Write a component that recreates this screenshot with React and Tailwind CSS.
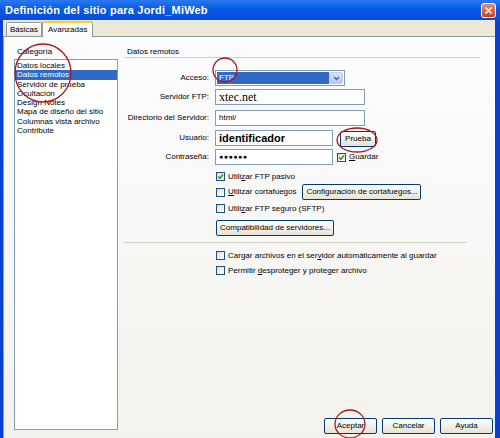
import React from "react";

const font = { fontFamily: '"Liberation Sans", Arial, sans-serif' };

const XpButton = ({ children, className = "" }) => (
  <div
    className={`h-[16px] flex items-center justify-center rounded-[2px] border border-[#003c74] bg-gradient-to-b from-white to-[#e6e3d6] text-[8px] text-black whitespace-nowrap ${className}`}
  >
    {children}
  </div>
);

const Check = ({ checked }) => (
  <div className="w-[9px] h-[9px] border border-[#1c5180] bg-gradient-to-br from-[#dcdcd7] to-white flex items-center justify-center shrink-0">
    {checked && (
      <svg width="7" height="7" viewBox="0 0 7 7">
        <path d="M1 3.5 L2.8 5.3 L6 1.5" stroke="#21a121" strokeWidth="1.5" fill="none" />
      </svg>
    )}
  </div>
);

const CheckRow = ({ checked, children, className = "" }) => (
  <div className={`flex items-center gap-[3px] text-[8px] text-black whitespace-nowrap ${className}`}>
    <Check checked={checked} />
    <span>{children}</span>
  </div>
);

const Field = ({ label, children, className = "" }) => (
  <div className={`flex items-center h-[16px] ${className}`}>
    <div className="w-[91px] shrink-0 flex justify-end pr-[6px] text-[8px] text-black whitespace-nowrap">
      {label}
    </div>
    {children}
  </div>
);

const Input = ({ w, children }) => (
  <div className={`h-[16px] ${w} border border-[#7f9db9] bg-white flex items-center px-[3px] overflow-hidden`}>
    {children}
  </div>
);

const categories = [
  "Datos locales",
  "Datos remotos",
  "Servidor de prueba",
  "Ocultación",
  "Design Notes",
  "Mapa de diseño del sitio",
  "Columnas vista archivo",
  "Contribute",
];

export default function App() {
  return (
    <div
      className="relative w-[500px] h-[438px] overflow-hidden bg-[#0a3fd8] flex flex-col"
      style={font}
    >
      {/* title bar */}
      <div className="h-[20px] shrink-0 bg-gradient-to-b from-[#2a78f0] via-[#0558e6] to-[#0a4cd8] flex items-center justify-between pl-[5px] pr-[4px]">
        <span className="text-white font-bold text-[11px] tracking-[0.2px]">
          Definición del sitio para Jordi_MiWeb
        </span>
        <div className="w-[15px] h-[15px] rounded-[3px] border border-white bg-gradient-to-b from-[#e58b6e] to-[#c8401c] flex items-center justify-center">
          <svg width="9" height="9" viewBox="0 0 9 9">
            <path d="M1.5 1.5 L7.5 7.5 M7.5 1.5 L1.5 7.5" stroke="white" strokeWidth="1.6" />
          </svg>
        </div>
      </div>

      {/* client area */}
      <div className="flex-1 ml-[3px] mr-[5px] bg-[#ece9d8] flex flex-col">
        {/* tabs */}
        <div className="h-[16px] shrink-0 flex items-end pl-[3px]">
          <div className="h-[14px] px-[3px] flex items-center border border-b-0 border-[#919b9c] rounded-t-[2px] bg-gradient-to-b from-white to-[#ecebe5] text-[8px] text-black">
            Básicas
          </div>
          <div className="h-[16px] px-[5px] flex items-center border-x border-[#919b9c] border-t-2 border-t-[#ffc83c] rounded-t-[2px] bg-[#fcfcfe] text-[8px] text-black -mb-px relative">
            Avanzadas
          </div>
        </div>

        {/* panel */}
        <div className="flex-1 border-t border-l border-[#919b9c] bg-gradient-to-b from-[#fcfcfe] to-[#f3f2ec] flex pl-[10px] pt-[9px]">
          {/* left column */}
          <div className="w-[104px] flex flex-col">
            <div className="text-[8px] text-black pl-[3px] h-[13px]">Categoría</div>
            <div className="h-[371px] border border-[#7f9db9] bg-white flex flex-col pt-[1px]">
              {categories.map((c, i) => (
                <div
                  key={c}
                  className={`h-[9.3px] leading-[9.3px] text-[8px] pl-[2px] whitespace-nowrap ${
                    i === 1 ? "bg-[#316ac5] text-white" : "text-black"
                  }`}
                >
                  {c}
                </div>
              ))}
            </div>
          </div>

          {/* right column */}
          <div className="ml-[6px] w-[356px] flex flex-col">
            <div className="h-[12px] text-[8px] text-black pl-[3px] border-b border-[#d0d0bf]">
              Datos remotos
            </div>

            <Field label="Acceso:" className="mt-[12px]">
              <div className="h-[16px] w-[130px] border border-[#7f9db9] bg-white flex p-[1px]">
                <div className="flex-1 bg-[#316ac5] text-white text-[8px] flex items-center pl-[2px]">FTP</div>
                <div className="w-[14px] rounded-[2px] bg-gradient-to-b from-[#d6e4fb] to-[#b3cbf5] border border-[#b9cdf4] flex items-center justify-center">
                  <svg width="7" height="5" viewBox="0 0 7 5">
                    <path d="M1 1 L3.5 3.5 L6 1" stroke="#4d6185" strokeWidth="1.4" fill="none" />
                  </svg>
                </div>
              </div>
            </Field>

            <Field label="Servidor FTP:" className="mt-[3px]">
              <Input w="w-[150px]">
                <span className="text-[12px] text-black" style={{ fontFamily: '"Liberation Serif", serif' }}>
                  xtec.net
                </span>
              </Input>
            </Field>

            <Field label="Directorio del Servidor:" className="mt-[5px]">
              <Input w="w-[150px]">
                <span className="text-[8px] text-black">html/</span>
              </Input>
            </Field>

            <Field label="Usuario:" className="mt-[4px]">
              <Input w="w-[118px]">
                <span className="text-[11px] font-bold text-black">identificador</span>
              </Input>
              <XpButton className="ml-[7px] w-[36px] mt-[1px]">Prueba</XpButton>
            </Field>

            <Field label="Contraseña:" className="mt-[3px]">
              <Input w="w-[118px]">
                <span className="text-[7px] text-black tracking-[0.5px]">●●●●●●</span>
              </Input>
              <CheckRow checked className="ml-[4px]">
                <span className="underline">G</span>uardar
              </CheckRow>
            </Field>

            <div className="pl-[92px] flex flex-col">
              <CheckRow checked className="mt-[6px] h-[11px]">
                Utili<span className="underline">z</span>ar FTP pasivo
              </CheckRow>
              <div className="flex items-center mt-[2px] h-[16px]">
                <CheckRow>
                  <span className="underline">U</span>tilizar cortafuegos
                </CheckRow>
                <XpButton className="ml-[6px] w-[119px]">Configuración de cortafuegos...</XpButton>
              </div>
              <CheckRow className="mt-[3px] h-[11px]">
                Utili<span className="underline">z</span>ar FTP seguro (SFTP)
              </CheckRow>
              <XpButton className="mt-[6px] w-[118px]">Compatibilidad de servidores...</XpButton>
            </div>

            <div className="mt-[6px] w-[343px] border-b border-[#d0d0bf]" />

            <div className="pl-[92px] flex flex-col">
              <CheckRow className="mt-[7px] h-[11px]">
                Cargar archivos en el ser<span className="underline">v</span>idor automáticamente al guardar
              </CheckRow>
              <CheckRow className="mt-[4px] h-[11px]">
                Permitir <span className="underline">d</span>esproteger y proteger archivo
              </CheckRow>
            </div>

            <div className="flex-1" />
            <div className="flex justify-end gap-[5px] mb-[4px] -mr-[13px]">
              <XpButton className="w-[53px]">Aceptar</XpButton>
              <XpButton className="w-[53px]">Cancelar</XpButton>
              <XpButton className="w-[53px]">Ayuda</XpButton>
            </div>
          </div>
        </div>
      </div>

      {/* red annotation circles drawn over the screenshot */}
      <svg className="absolute inset-0 pointer-events-none" width="500" height="438">
        <ellipse cx="43" cy="73" rx="28" ry="29" fill="none" stroke="#a8181e" strokeWidth="1.3" />
        <ellipse cx="225" cy="70" rx="12" ry="12" fill="none" stroke="#a8181e" strokeWidth="1.3" />
        <ellipse cx="357" cy="140" rx="20" ry="12" fill="none" stroke="#a8181e" strokeWidth="1.3" />
        <ellipse cx="350" cy="424" rx="15" ry="14" fill="none" stroke="#a8181e" strokeWidth="1.3" />
      </svg>
    </div>
  );
}
